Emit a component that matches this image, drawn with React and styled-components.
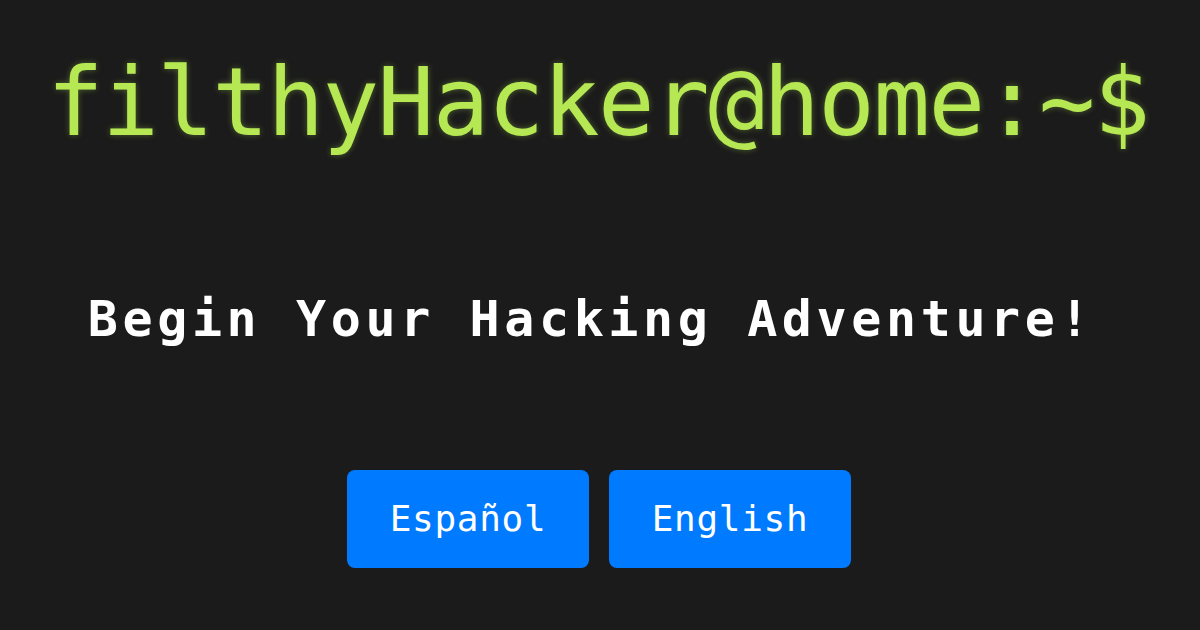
import React from "react";
import styled, { createGlobalStyle } from "styled-components";

const GlobalStyle = createGlobalStyle`
  html, body {
    margin: 0;
    padding: 0;
    background: #1b1b1b;
  }
  #root {
    min-height: 630px;
  }
`;

const Page = styled.div`
  width: 1200px;
  height: 630px;
  box-sizing: border-box;
  padding-top: 47px;
  display: flex;
  flex-direction: column;
  align-items: center;
  background: #1b1b1b;
  font-family: "DejaVu Sans Mono", "Liberation Mono", monospace;
  overflow: hidden;
`;

const Prompt = styled.h1`
  margin: 0 4px 0 0;
  font-size: 94px;
  line-height: 1.2;
  font-weight: normal;
  letter-spacing: -1.5px;
  color: #b5e853;
  text-shadow: 0 0 6px rgba(181, 232, 83, 0.35);
  white-space: nowrap;
`;

const Tagline = styled.h2`
  margin: 129px 18px 0 0;
  font-size: 50px;
  line-height: 1.2;
  font-weight: bold;
  letter-spacing: 4.6px;
  color: #ffffff;
  white-space: nowrap;
`;

const LangRow = styled.div`
  display: flex;
  gap: 20px;
  margin: 121px 2px 0 0;
`;

const LangButton = styled.button`
  font-family: inherit;
  font-size: 36px;
  line-height: 44px;
  letter-spacing: 0.7px;
  color: #ffffff;
  background: #007bff;
  border: none;
  border-radius: 8px;
  padding: 27px 0;
  width: 242px;
  cursor: pointer;
`;

const App = () => {
  return (
    <>
      <GlobalStyle />
      <Page>
        <Prompt>filthyHacker@home:~$</Prompt>
        <Tagline>Begin Your Hacking Adventure!</Tagline>
        <LangRow>
          <LangButton>Español</LangButton>
          <LangButton>English</LangButton>
        </LangRow>
      </Page>
    </>
  );
};

export default App;
